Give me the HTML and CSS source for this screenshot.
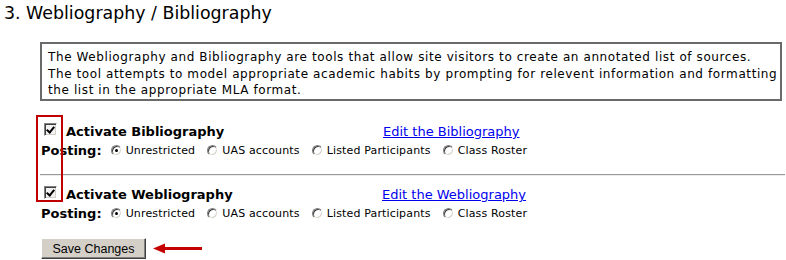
FILE: index.html
```html
<!DOCTYPE html>
<html lang="en">
<head>
<meta charset="utf-8">
<title>Webliography / Bibliography</title>
<link rel="stylesheet" href="styles.css">
</head>
<body>
<h1 class="title">3. Webliography / Bibliography</h1>
<div class="info">The Webliography and Bibliography are tools that allow site visitors to create an annotated list of sources.<br>The tool attempts to model appropriate academic habits by prompting for relevent information and formatting<br>the list in the appropriate MLA format.</div>

<form class="options">
  <div class="tool">
    <label class="activate"><input type="checkbox" class="chk" checked>Activate Bibliography</label>
    <a class="edit" href="#">Edit the Bibliography</a>
    <div class="posting">
      <span class="posting-label">Posting:</span>
      <label class="opt"><input type="radio" class="rad" name="bib" checked>Unrestricted</label>
      <label class="opt"><input type="radio" class="rad" name="bib">UAS accounts</label>
      <label class="opt"><input type="radio" class="rad" name="bib">Listed Participants</label>
      <label class="opt"><input type="radio" class="rad" name="bib">Class Roster</label>
    </div>
  </div>
  <hr class="sep">
  <div class="tool">
    <label class="activate"><input type="checkbox" class="chk" checked>Activate Webliography</label>
    <a class="edit edit-web" href="#">Edit the Webliography</a>
    <div class="posting">
      <span class="posting-label">Posting:</span>
      <label class="opt"><input type="radio" class="rad" name="web" checked>Unrestricted</label>
      <label class="opt"><input type="radio" class="rad" name="web">UAS accounts</label>
      <label class="opt"><input type="radio" class="rad" name="web">Listed Participants</label>
      <label class="opt"><input type="radio" class="rad" name="web">Class Roster</label>
    </div>
  </div>
  <div class="actions">
    <button type="button" class="save">Save Changes</button>
    <svg class="arrow" width="49" height="11" viewBox="0 0 49 11" aria-hidden="true">
      <path d="M0 5.5 L12 0.5 L12 4 L49 4 L49 7 L12 7 L12 10.5 Z" fill="#c40000"/>
    </svg>
  </div>
  <div class="highlight" aria-hidden="true"></div>
</form>
</body>
</html>
```
FILE: styles.css
```css
html, body {
  margin: 0;
  padding: 0;
  background: #fff;
}
body {
  font-family: "DejaVu Sans", Verdana, sans-serif;
  color: #000;
  width: 786px;
  height: 260px;
  overflow: hidden;
}
.title {
  margin: 0;
  padding: 3px 0 0 4px;
  font-size: 17.4px;
  line-height: 20px;
  font-weight: normal;
}
.info {
  margin: 19px 0 0 40px;
  width: 742px;
  box-sizing: border-box;
  border: 2px solid #6a6a6a;
  padding: 5px 0 0 6px;
  height: 59px;
  font-size: 12px;
  letter-spacing: 0.6px;
  line-height: 16.5px;
  white-space: nowrap;
  overflow: hidden;
}
.options {
  position: relative;
  margin: 21px 0 0 40px;
}
.tool {
  display: grid;
  grid-template-columns: 342px auto;
  padding-left: 1px;
}
.activate {
  display: flex;
  align-items: center;
  height: 19px;
  font-size: 13px;
  font-weight: bold;
  white-space: pre;
}
.chk {
  appearance: none;
  -webkit-appearance: none;
  position: relative;
  box-sizing: border-box;
  width: 13px;
  height: 13px;
  margin: 1px 9px 0 3px;
  align-self: flex-start;
  border: 1px solid;
  border-color: #808080 #fff #fff #808080;
  box-shadow: inset 1px 1px #404040, inset -1px -1px #d4d0c8;
  background: #f2f2f2;
}
.chk:checked::after {
  content: "";
  position: absolute;
  left: 3px;
  top: 1px;
  width: 3px;
  height: 6px;
  border: solid #000;
  border-width: 0 2px 2px 0;
  transform: rotate(40deg);
}
.edit {
  align-self: center;
  font-size: 13px;
  line-height: 19px;
  color: #0000ee;
  text-decoration: underline;
}
.edit-web {
  margin-left: -1px;
}
.posting {
  grid-column: 1 / 3;
  display: flex;
  align-items: center;
  height: 19px;
}
.posting-label {
  font-size: 13px;
  font-weight: bold;
  margin-right: 9px;
}
.opt {
  display: flex;
  align-items: center;
  font-size: 11px;
  letter-spacing: 0.15px;
  margin-right: 12px;
}
.rad {
  appearance: none;
  -webkit-appearance: none;
  position: relative;
  box-sizing: border-box;
  width: 11px;
  height: 11px;
  margin: 1px 4px 0 0;
  align-self: flex-start;
  border-radius: 50%;
  border: 1px solid;
  border-color: #808080 #fff #fff #808080;
  box-shadow: inset 1px 1px #404040, inset -1px -1px #d4d0c8;
  background: #fff;
}
.rad:checked::after {
  content: "";
  position: absolute;
  left: 3px;
  top: 3px;
  width: 3px;
  height: 3px;
  border-radius: 50%;
  background: #000;
}
.sep {
  margin: 14px 1px 9px 0;
  border: 0;
  border-top: 1px solid #9a9a9a;
  border-bottom: 1px solid #ececec;
  height: 0;
}
.actions {
  display: flex;
  align-items: center;
  margin-top: 15px;
  padding-left: 1px;
}
.save {
  box-sizing: border-box;
  width: 105px;
  height: 21px;
  padding: 0;
  font-family: "Liberation Sans", Arial, sans-serif;
  font-size: 12.5px;
  color: #000;
  background: #d4d0c8;
  border: 1px solid;
  border-color: #fff #404040 #404040 #fff;
  box-shadow: inset -1px -1px #808080;
  border-radius: 0;
}
.arrow {
  display: block;
  margin-left: 7px;
}
.highlight {
  position: absolute;
  left: -4px;
  top: -7px;
  width: 27px;
  height: 87px;
  box-sizing: border-box;
  border: 2px solid #c00000;
}
```
